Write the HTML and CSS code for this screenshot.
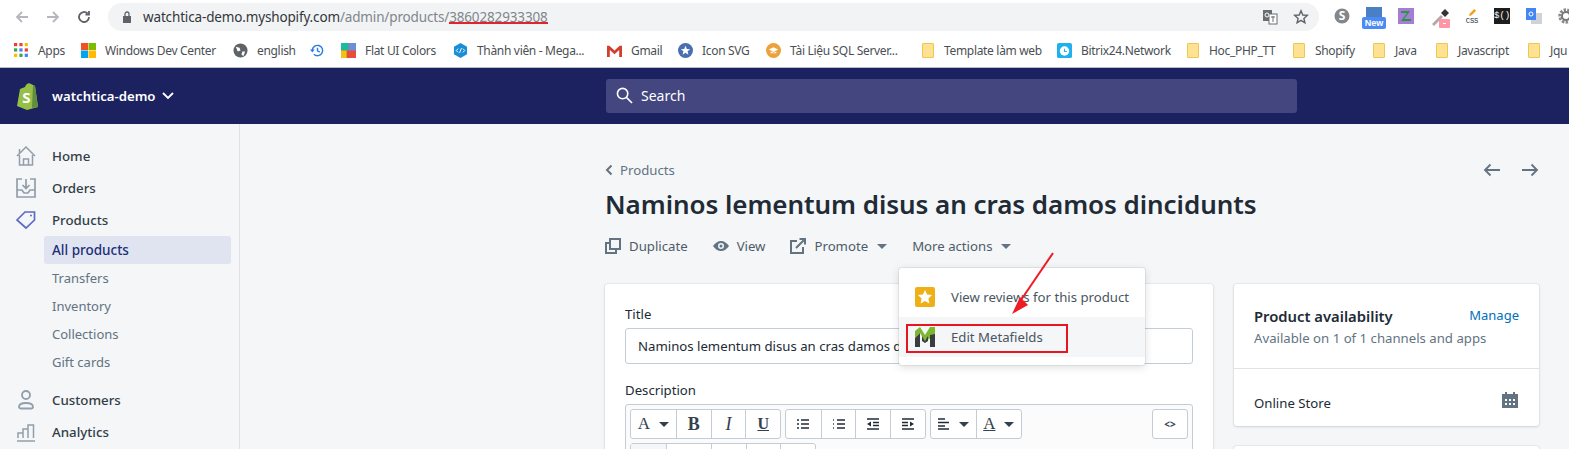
FILE: index.html
```html
<!DOCTYPE html>
<html lang="en">
  <head>
    <title>Products - watchtica-demo</title>
    <meta charset="UTF-8" />
    <link rel="stylesheet" href="styles.css">
  </head>
  <body>
    <!-- browser bars -->
    <div class="toolbar-top">
      <svg class="nav-btn" viewBox="0 0 16 16"><path d="M14 8H3M8 3L3 8l5 5" stroke="#b4b7bb"/></svg>
      <svg class="nav-btn" viewBox="0 0 16 16"><path d="M2 8h11M8 3l5 5-5 5" stroke="#b4b7bb"/></svg>
      <svg class="nav-btn" viewBox="0 0 16 16"><path d="M13 8a5 5 0 1 1-1.500-3.600M13 2v3.500H9.500" stroke="#5f6368"/></svg>
      <div class="omnibox">
        <svg class="lock" viewBox="0 0 10 12"><path d="M1 5h8v7H1z" fill="#5f6368"/><path d="M3 5V3a2 2 0 0 1 4 0v2" fill="none" stroke="#5f6368" stroke-width="1.300"/></svg>
        <span class="url">watchtica-demo.myshopify.com<span class="url-dim">/admin/products/<span class="url-id">3860282933308</span></span></span>
        <svg class="omni-icon" viewBox="0 0 16 16"><rect x="1" y="1" width="9" height="11" fill="#6a6e73"/><rect x="7" y="5" width="8" height="10" fill="#fff" stroke="#6a6e73"/><circle cx="5" cy="6" r="2" fill="none" stroke="#fff"/><path d="M9 8h4M11 7v6" stroke="#6a6e73"/></svg>
        <svg class="omni-icon" viewBox="0 0 16 16"><path d="M8 1.800l1.800 4.200 4.500.4-3.400 3 1 4.400L8 11.400l-3.900 2.400 1-4.400-3.400-3 4.500-.4z" fill="none" stroke="#5f6368" stroke-width="1.400"/></svg>
      </div>
      <div class="ext-icons">
        <svg class="ext" viewBox="0 0 16 16"><circle cx="8" cy="8" r="7.500" fill="#85868a"/><text x="8" y="12" class="ext-s">S</text></svg>
        <div class="ext-new"><span class="ext-new-top"></span><span class="ext-new-label">New</span></div>
        <svg class="ext ext-z" viewBox="0 0 16 16"><rect width="16" height="16" fill="#a77bd6"/><path d="M3 3h9L6 11h7v2H3l6-8H3z" fill="#1f9c3c"/></svg>
        <svg class="ext ext-drop" viewBox="0 0 20 20"><path d="M2 16l9-9 2 2-9 9z" fill="#b8a6a6"/><path d="M11 5l4-4 4 4-4 4z" fill="#333"/><rect x="9" y="11" width="11" height="9" rx="1" fill="#ff96a6"/><rect x="13" y="15" width="3" height="1" fill="#fff"/></svg>
        <div class="ext-css"><svg class="ext-pen" viewBox="0 0 10 10"><path d="M1 9l1-3 5-5 2 2-5 5z" fill="#f0a020"/></svg><span>CSS</span></div>
        <div class="ext-jq">$()</div>
        <svg class="ext" viewBox="0 0 16 16"><rect x="5" y="5" width="11" height="11" fill="#cfd2d6"/><rect width="10" height="12" fill="#4285f4"/><circle cx="5" cy="6" r="2" fill="none" stroke="#fff"/></svg>
        <svg class="ext" viewBox="0 0 16 16"><circle cx="8" cy="8" r="6" fill="none" stroke="#8a8a8a" stroke-width="3.400" stroke-dasharray="2.400 1.200"/><circle cx="8" cy="8" r="4" fill="none" stroke="#777" stroke-width="2"/></svg>
      </div>
    </div>
    <div class="bookmarks">
      <div class="bm"><svg class="bm-icon" viewBox="0 0 14 14"><g><rect x="0" width="3" height="3" fill="#ea4335"/><rect x="5" width="3" height="3" fill="#ea4335"/><rect x="10" width="3" height="3" fill="#fbbc05"/><rect x="0" y="5" width="3" height="3" fill="#34a853"/><rect x="5" y="5" width="3" height="3" fill="#4285f4"/><rect x="10" y="5" width="3" height="3" fill="#ea4335"/><rect x="0" y="10" width="3" height="3" fill="#fbbc05"/><rect x="5" y="10" width="3" height="3" fill="#34a853"/><rect x="10" y="10" width="3" height="3" fill="#4285f4"/></g></svg>Apps</div>
      <div class="bm"><svg class="bm-icon" viewBox="0 0 16 16"><rect width="7.500" height="7.500" fill="#f25022"/><rect x="8" width="8" height="7.500" fill="#7fba00"/><rect y="8" width="7.500" height="8" fill="#00a4ef"/><rect x="8" y="8" width="8" height="8" fill="#ffb900"/></svg>Windows Dev Center</div>
      <div class="bm"><svg class="bm-icon" viewBox="0 0 16 16"><circle cx="8" cy="8" r="7.500" fill="#5f6368"/><path d="M3 4l4 1 1 3-3 1zM10 9l3 0-2 5-2-2z" fill="#fff"/></svg>english</div>
      <div class="bm"><svg class="bm-icon" viewBox="0 0 16 16"><path d="M2.500 8a5.500 5.500 0 1 1 1.600 3.900M8 5v3.400l2.400 1.400" fill="none" stroke="#2a7de1" stroke-width="1.500"/><path d="M0 7h5L2.500 10z" fill="#2a7de1"/></svg></div>
      <div class="bm"><svg class="bm-icon" viewBox="0 0 16 16"><rect width="16" height="16" fill="#e74c3c"/><rect width="8" height="8" fill="#1abc9c"/><rect x="8" width="8" height="8" fill="#6c8fd6"/><rect y="8" width="6" height="8" fill="#f1c40f"/></svg>Flat UI Colors</div>
      <div class="bm"><svg class="bm-icon" viewBox="0 0 16 16"><path d="M8 0l7 4v8l-7 4-7-4V4z" fill="#1a8fd8"/><path d="M5.500 6L3.500 8l2 2M10.500 6l2 2-2 2M9 5.500L7 10.500" fill="none" stroke="#fff"/></svg>Thành viên - Mega...</div>
      <div class="bm"><svg class="bm-icon" viewBox="0 0 16 16"><path d="M0 3h2.500L8 8l5.500-5H16v12h-3V7.500L8 12 3 7.500V15H0z" fill="#d0402f"/></svg>Gmail</div>
      <div class="bm"><svg class="bm-icon" viewBox="0 0 16 16"><circle cx="8" cy="8" r="8" fill="#4a6fb0"/><path d="M8 3l1.400 3.400 3.600.2-2.800 2.300.9 3.500L8 10.500l-3.100 1.900.9-3.500L3 6.600l3.600-.2z" fill="#fff"/></svg>Icon SVG</div>
      <div class="bm"><svg class="bm-icon" viewBox="0 0 16 16"><circle cx="8" cy="8" r="8" fill="#eda13a"/><path d="M3 7l5-2.500L13 7l-5 2.500z" fill="#fff"/><path d="M5 9v2h6V9l-3 1.500z" fill="#fff"/></svg>Tài Liệu SQL Server...</div>
      <div class="bm"><span class="folder"></span>Template làm web</div>
      <div class="bm"><svg class="bm-icon" viewBox="0 0 16 16"><rect width="16" height="16" rx="2" fill="#1fb1ec"/><circle cx="8" cy="8.500" r="5" fill="#fff"/><path d="M8 6v3h2.500" fill="none" stroke="#1fb1ec" stroke-width="1.200"/></svg>Bitrix24.Network</div>
      <div class="bm"><span class="folder"></span>Hoc_PHP_TT</div>
      <div class="bm"><span class="folder"></span>Shopify</div>
      <div class="bm"><span class="folder"></span>Java</div>
      <div class="bm"><span class="folder"></span>Javascript</div>
      <div class="bm"><span class="folder"></span>Jqu</div>
    </div>

    <!-- shopify top bar -->
    <header class="topbar">
      <div class="store">
        <svg class="shop-logo" viewBox="2 0 22 28"><path d="M2 24L5 7l5-2c1-3 4-5 6-3l2 1 2 1 3 21-11 3z" fill="#95bf47"/><path d="M18 3l2 1 3 21-6 1z" fill="#5e8e3e"/><text x="11.500" y="21" class="shop-s">S</text></svg>
        <span class="store-name">watchtica-demo</span>
        <svg class="store-caret" viewBox="0 0 12 8"><path d="M1 1l5 5 5-5" fill="none" stroke="#fff" stroke-width="1.800"/></svg>
      </div>
      <div class="search">
        <svg class="search-icon" viewBox="0 0 18 18"><circle cx="7" cy="7" r="5.500" fill="none" stroke="#fff" stroke-width="1.700"/><path d="M11 11l6 6" stroke="#fff" stroke-width="1.700"/></svg>
        Search
      </div>
    </header>

    <div class="layout">
      <nav class="sidebar">
        <a class="nav-item"><svg class="nav-icon" viewBox="0 0 20 20"><path d="M1 10L10 1l9 9M3.500 3v5M3.500 9v10h13V9M7.500 19v-6h5v6" fill="none" stroke="#919eab" stroke-width="1.500"/></svg>Home</a>
        <a class="nav-item"><svg class="nav-icon" viewBox="0 0 20 20"><path d="M6 1H1v18h18V1h-5M1 12h5l2 3h4l2-3h5M10 1v9M6.500 7L10 10.500 13.500 7" fill="none" stroke="#919eab" stroke-width="1.700"/></svg>Orders</a>
        <a class="nav-item"><svg class="nav-icon" viewBox="0 0 20 20"><path d="M1 10l8-8h9.500v8l-8.500 8z" fill="none" stroke="#5c6ac4" stroke-width="1.700"/><circle cx="15" cy="5.500" r="1" fill="#5c6ac4"/></svg>Products</a>
        <a class="sub-item sub-active">All products</a>
        <a class="sub-item">Transfers</a>
        <a class="sub-item">Inventory</a>
        <a class="sub-item">Collections</a>
        <a class="sub-item">Gift cards</a>
        <a class="nav-item nav-gap"><svg class="nav-icon" viewBox="0 0 20 20"><circle cx="10" cy="5" r="4" fill="none" stroke="#919eab" stroke-width="1.800"/><path d="M3 17c0-3 3-4 7-4s7 1 7 4c0 1-1 1.500-2 1.500H5c-1 0-2-.5-2-1.500z" fill="none" stroke="#919eab" stroke-width="1.800"/></svg>Customers</a>
        <a class="nav-item"><svg class="nav-icon" viewBox="0 0 20 20"><path d="M1 19h18M2 16v-5h5v5M7 16V7h5v9M12 16V3h5.500v13" fill="none" stroke="#919eab" stroke-width="1.500"/></svg>Analytics</a>
      </nav>

      <main class="main">
        <div class="crumb-row">
          <div class="crumb"><svg class="crumb-icon" viewBox="0 0 8 12"><path d="M6.500 1.500L2 6l4.500 4.500" fill="none" stroke="#637381" stroke-width="2"/></svg>Products</div>
          <div class="pager">
            <svg class="pager-icon" viewBox="0 0 18 14"><path d="M17 7H2M7.500 1.500L2 7l5.500 5.500" fill="none" stroke="#637381" stroke-width="1.800"/></svg>
            <svg class="pager-icon" viewBox="0 0 18 14"><path d="M1 7h15M10.500 1.500L16 7l-5.500 5.500" fill="none" stroke="#637381" stroke-width="1.800"/></svg>
          </div>
        </div>
        <h1 class="title">Naminos lementum disus an cras damos dincidunts</h1>
        <div class="actions">
          <span class="action"><svg class="action-icon" viewBox="0 0 16 16"><path d="M5 1h10v10H5z" fill="none" stroke="#637381" stroke-width="2"/><path d="M4 5H1v10h10v-3" fill="none" stroke="#637381" stroke-width="2"/></svg>Duplicate</span>
          <span class="action"><svg class="action-icon" viewBox="0 0 16 16"><path d="M0 8c2-3 5-5 8-5s6 2 8 5c-2 3-5 5-8 5s-6-2-8-5z" fill="#637381"/><circle cx="8" cy="8" r="3" fill="#f4f6f8"/><circle cx="8" cy="8" r="1.500" fill="#637381"/></svg>View</span>
          <span class="action"><svg class="action-icon" viewBox="0 0 16 16"><path d="M7 3H1v12h12V9M6 10L15 1M9.500 1H15v5.500" fill="none" stroke="#637381" stroke-width="2"/></svg>Promote<i class="caret"></i></span>
          <span class="action">More actions<i class="caret"></i></span>
        </div>

        <div class="columns">
          <section class="card card-main">
            <label class="field-label">Title</label>
            <div class="field-input">Naminos lementum disus an cras damos dincidunts</div>
            <label class="field-label field-label-desc">Description</label>
            <div class="editor">
              <div class="editor-row">
                <div class="btn-group">
                  <span class="ed-btn ed-wide ed-serif">A<i class="caret caret-dark"></i></span>
                  <span class="ed-btn ed-serif ed-b">B</span>
                  <span class="ed-btn ed-serif ed-i">I</span>
                  <span class="ed-btn ed-serif ed-u">U</span>
                </div>
                <div class="btn-group">
                  <span class="ed-btn"><svg class="ed-icon" viewBox="0 0 12 12"><path d="M0 2h2M4 2h8M0 6h2M4 6h8M0 10h2M4 10h8" stroke="#212b36" stroke-width="1.500"/></svg></span>
                  <span class="ed-btn"><svg class="ed-icon" viewBox="0 0 12 12"><path d="M4 2h8M4 6h8M4 10h8" stroke="#212b36" stroke-width="1.500"/><path d="M0 2h2M0 6h2M0 10h2" stroke="#637381" stroke-width="2" stroke-dasharray="1 1"/></svg></span>
                  <span class="ed-btn"><svg class="ed-icon" viewBox="0 0 12 12"><path d="M0 1h12M6 4.500h6M6 7.500h6M0 11h12" stroke="#212b36" stroke-width="1.500"/><path d="M4 3.500v5L0 6z" fill="#212b36"/></svg></span>
                  <span class="ed-btn"><svg class="ed-icon" viewBox="0 0 12 12"><path d="M0 1h12M0 4.500h6M0 7.500h6M0 11h12" stroke="#212b36" stroke-width="1.500"/><path d="M8 3.500v5L12 6z" fill="#212b36"/></svg></span>
                </div>
                <div class="btn-group">
                  <span class="ed-btn ed-wide"><svg class="ed-icon" viewBox="0 0 12 12"><path d="M0 1h7M0 4.500h11M0 8h7M0 11h11" stroke="#212b36" stroke-width="1.500"/></svg><i class="caret caret-dark"></i></span>
                  <span class="ed-btn ed-wide ed-serif ed-color">A<i class="caret caret-dark"></i></span>
                </div>
                <div class="btn-group btn-group-end">
                  <span class="ed-btn ed-code">&lt;&gt;</span>
                </div>
              </div>
              <div class="editor-row">
                <div class="btn-group">
                  <span class="ed-btn ed-first"></span>
                  <span class="ed-btn ed-wide"></span>
                  <span class="ed-btn"></span>
                  <span class="ed-btn"></span>
                  <span class="ed-btn"></span>
                </div>
              </div>
            </div>
          </section>

          <aside class="side">
            <section class="card card-avail">
              <div class="avail-head">
                <div class="avail-top"><h2 class="avail-title">Product availability</h2><a class="manage">Manage</a></div>
                <p class="avail-sub">Available on 1 of 1 channels and apps</p>
              </div>
              <div class="avail-row">
                <span>Online Store</span>
                <svg class="cal-icon" viewBox="0 0 16 16"><path d="M0 2h3V0h2v2h6V0h2v2h3v14H0z" fill="#637381"/><path d="M3 7h2v2H3zM7 7h2v2H7zM11 7h2v2h-2zM3 11h2v2H3zM7 11h2v2H7zM11 11h2v2h-2z" fill="#fff"/></svg>
              </div>
            </section>
            <section class="card card-next"></section>
          </aside>
        </div>
      </main>
    </div>

    <!-- open menu and the annotations drawn over the screenshot -->
    <div class="menu">
      <div class="menu-item"><svg class="menu-icon" viewBox="0 0 20 20"><rect width="20" height="20" rx="2" fill="#eeb016"/><path d="M10 3l2.100 4.600 5 .5-3.700 3.400 1 4.900L10 13.900l-4.400 2.500 1-4.900L2.900 8.100l5-.5z" fill="#fff"/></svg>View reviews for this product</div>
      <div class="menu-item menu-item-on"><svg class="menu-icon" viewBox="0 0 20 20"><path d="M0 4L5 0l5 8 5-8h5v9L10 14 5 6l-5 5z" fill="#7cb82f"/><path d="M0 11l5-5v14H0zM15 8l5-1v13h-5zM7 9l3 5 3-5v5l-3 2-3-2z" fill="#3a3d40"/></svg>Edit Metafields</div>
    </div>
    <div class="red-box"></div>
    <svg class="red-arrow" viewBox="0 0 60 70"><path d="M48 2L16 49" stroke="#ee1c25" stroke-width="2"/><path d="M7 63l8-17 8 8z" fill="#ee1c25"/></svg>
  </body>
</html>
```

FILE: styles.css
```css
* {
  box-sizing: border-box;
}
html, body {
  margin: 0;
  height: 449px;
  overflow: hidden;
}
body {
  position: relative;
  background: #f4f6f8;
  font-family: "Noto Sans", "Open Sans", sans-serif;
  font-size: 14px;
  color: #212b36;
}

/* browser chrome */
.toolbar-top {
  height: 34px;
  padding: 3px 0 0 14px;
  display: flex;
  background: #fff;
}
.nav-btn {
  width: 16px;
  height: 16px;
  margin: 6px 15px 0 0;
  flex: none;
  fill: none;
  stroke-width: 1.800;
}
.omnibox {
  width: 1211px;
  height: 28px;
  margin-left: 1px;
  padding: 0 10px 0 14px;
  display: flex;
  flex: none;
  align-items: center;
  background: #f1f3f4;
  border-radius: 14px;
}
.lock {
  width: 10px;
  height: 12px;
  margin-right: 11px;
}
.url {
  flex: 1;
  font-size: 13.500px;
  letter-spacing: -0.150px;
  color: #33373b;
}
.url-dim {
  color: #80868b;
}
.url-id {
  position: relative;
}
.url-id::after {
  content: "";
  position: absolute;
  left: 0;
  right: 0;
  bottom: 2px;
  height: 2px;
  background: #e0232e;
}
.omni-icon {
  width: 16px;
  height: 16px;
  margin-left: 15px;
}
.ext-icons {
  display: flex;
  align-items: flex-start;
  gap: 16px;
  padding: 5px 0 0 15px;
}
.ext {
  width: 16px;
  height: 16px;
  flex: none;
}
.ext-s {
  font: bold 12px "Noto Sans", sans-serif;
  fill: #fff;
  text-anchor: middle;
}
.ext-new {
  width: 24px;
  height: 22px;
  margin: -1px -4px 0 -4px;
  display: flex;
  flex-direction: column;
  align-items: center;
  flex: none;
}
.ext-new-top {
  width: 16px;
  height: 10px;
  background: #4a7fc4;
}
.ext-new-label {
  width: 24px;
  height: 12px;
  border-radius: 2px;
  background: #4c8bf5;
  color: #fff;
  font: bold 9px/12px "Liberation Sans", sans-serif;
  text-align: center;
}
.ext-drop {
  width: 20px;
  height: 20px;
  margin-right: -3px;
}
.ext-css {
  width: 18px;
  margin-right: -3px;
  display: flex;
  flex-direction: column;
  align-items: center;
  font: 7px/8px "Liberation Mono", monospace;
  flex: none;
}
.ext-pen {
  width: 9px;
  height: 9px;
}
.ext-jq {
  width: 16px;
  height: 16px;
  background: #1d1d1d;
  color: #fff;
  font: 9px/16px "Liberation Mono", monospace;
  text-align: center;
  flex: none;
}
.bookmarks {
  height: 34px;
  padding-left: 14px;
  display: grid;
  grid-template-columns: 67px 152px 77px 31px 112px 154px 71px 88px 156px 135px 130px 106px 80px 63px 92px 40px;
  align-items: center;
  background: #fff;
  border-bottom: 1px solid #b9bcc2;
  font-size: 12px;
  letter-spacing: -0.320px;
  color: #4b4f54;
  white-space: nowrap;
  overflow: hidden;
}
.bm {
  display: flex;
  align-items: center;
}
.bm-icon {
  width: 15px;
  height: 15px;
  margin-right: 9px;
  flex: none;
}
.folder {
  width: 12px;
  height: 15px;
  margin-right: 10px;
  background: #fde293;
  border: 1px solid #f0c64e;
  border-radius: 1px;
  flex: none;
}

/* shopify top bar */
.topbar {
  height: 56px;
  display: flex;
  align-items: center;
  background: #1c2260;
}
.store {
  width: 606px;
  padding-left: 16px;
  display: flex;
  align-items: center;
}
.shop-logo {
  width: 24px;
  height: 28px;
  margin-right: 12px;
}
.shop-s {
  font: bold 15px "Noto Sans", sans-serif;
  fill: #fff;
  text-anchor: middle;
}
.store-name {
  font-size: 13.200px;
  font-weight: 600;
  color: #fff;
}
.store-caret {
  width: 12px;
  height: 8px;
  margin-left: 7px;
}
.search {
  width: 691px;
  height: 34px;
  padding: 0 0 2px 10px;
  display: flex;
  align-items: center;
  gap: 8px;
  background: #43467f;
  border-radius: 3px;
  color: #fff;
  font-size: 14px;
}
.search-icon {
  width: 17px;
  height: 17px;
}

/* body */
.layout {
  display: flex;
}
.sidebar {
  width: 240px;
  height: 325px;
  flex: none;
  padding: 16px 8px 0 0;
  border-right: 1px solid #dfe3e8;
  display: flex;
  flex-direction: column;
}
.nav-item {
  height: 32px;
  padding-left: 16px;
  display: flex;
  align-items: center;
  font-weight: 500;
  font-size: 13.300px;
  color: #333d47;
}
.nav-gap {
  margin-top: 8px;
}
.nav-icon {
  width: 20px;
  height: 20px;
  margin-right: 16px;
  flex: none;
}
.sub-item {
  height: 28px;
  margin-left: 44px;
  padding-left: 8px;
  display: flex;
  align-items: center;
  font-size: 13px;
  color: #637381;
}
.sub-active {
  background: #e0e4f1;
  border-radius: 3px;
  font-weight: 500;
  font-size: 13.500px;
  color: #202e78;
}
.main {
  flex: 1;
  padding: 36px 30px 0 365px;
}
.crumb-row {
  height: 20px;
  display: flex;
  justify-content: space-between;
  align-items: center;
}
.crumb {
  display: flex;
  align-items: center;
  gap: 7px;
  font-size: 13.200px;
  color: #637381;
}
.crumb-icon {
  width: 8px;
  height: 12px;
}
.pager {
  display: flex;
  gap: 20px;
}
.pager-icon {
  width: 18px;
  height: 14px;
}
.title {
  margin: 5px 0 0;
  height: 38px;
  font-size: 26px;
  line-height: 38px;
  font-weight: 600;
  letter-spacing: -0.050px;
  color: #212b36;
  white-space: nowrap;
}
.actions {
  height: 20px;
  margin-top: 13px;
  display: flex;
  align-items: center;
  gap: 25px;
  font-size: 13.200px;
  color: #4f5b68;
}
.action {
  display: flex;
  align-items: center;
}
.action-icon {
  width: 16px;
  height: 16px;
  margin-right: 8px;
}
.caret {
  width: 0;
  height: 0;
  margin-left: 9px;
  border: 5px solid transparent;
  border-top: 5px solid #637381;
  border-bottom: 0;
}
.caret-dark {
  border-top-color: #33404d;
}
.columns {
  display: flex;
  gap: 21px;
  margin-top: 28px;
}
.card {
  background: #fff;
  border-radius: 3px;
  box-shadow: 0 0 0 1px rgba(63, 63, 68, 0.05), 0 1px 3px 0 rgba(63, 63, 68, 0.15);
}
.card-main {
  width: 608px;
  height: 240px;
  padding: 20px;
}
.field-label {
  display: block;
  height: 20px;
  line-height: 20px;
  font-size: 13.200px;
}
.field-input {
  height: 36px;
  margin-top: 4px;
  padding-left: 12px;
  border: 1px solid #c4cdd5;
  border-radius: 3px;
  line-height: 34px;
  font-size: 13.200px;
  white-space: nowrap;
  overflow: hidden;
}
.field-label-desc {
  margin-top: 16px;
}
.editor {
  height: 60px;
  margin-top: 4px;
  padding: 4px;
  border: 1px solid #c4cdd5;
  border-radius: 3px 3px 0 0;
  background: #fbfbfc;
}
.editor-row {
  display: flex;
  gap: 4px;
  margin-bottom: 4px;
}
.btn-group {
  height: 30px;
  display: flex;
  border: 1px solid #c4cdd5;
  border-radius: 3px;
  background: #fff;
}
.btn-group-end {
  margin-left: auto;
}
.ed-btn {
  width: 34.700px;
  display: flex;
  align-items: center;
  justify-content: center;
  border-left: 1px solid #c4cdd5;
  color: #33404d;
}
.ed-btn:first-child {
  border-left: 0;
}
.ed-wide {
  width: 45px;
}
.ed-first {
  width: 35px;
  background: #f4f6f8;
}
.ed-serif {
  font-family: "Liberation Serif", serif;
  font-size: 17px;
}
.ed-b {
  font-weight: 700;
  font-size: 18px;
}
.ed-i {
  font-style: italic;
  font-size: 18px;
}
.ed-u {
  font-weight: 700;
  text-decoration: underline;
  font-size: 16px;
}
.ed-color {
  text-decoration: underline;
}
.ed-icon {
  width: 12px;
  height: 12px;
}
.ed-code {
  width: 34px;
  font-size: 10px;
  font-weight: 700;
}
.side {
  width: 305px;
  display: flex;
  flex-direction: column;
  gap: 20px;
}
.card-avail {
  height: 142px;
}
.avail-head {
  height: 85px;
  padding: 22px 20px 0;
  border-bottom: 1px solid #dfe3e8;
}
.avail-top {
  display: flex;
  justify-content: space-between;
  align-items: flex-start;
}
.avail-title {
  margin: 0;
  font-size: 14.800px;
  line-height: 20px;
  font-weight: 600;
}
.manage {
  line-height: 18px;
  font-size: 13px;
  color: #006fbb;
}
.avail-sub {
  margin: 2px 0 0;
  font-size: 13.200px;
  line-height: 20px;
  color: #637381;
}
.avail-row {
  height: 57px;
  padding: 10px 21px 0 20px;
  display: flex;
  justify-content: space-between;
  align-items: center;
  font-size: 13.200px;
}
.cal-icon {
  width: 16px;
  height: 16px;
  margin-top: -6px;
}
.card-next {
  height: 60px;
}

/* dropdown over the page */
.menu {
  position: absolute;
  left: 899px;
  top: 268px;
  width: 246px;
  height: 97px;
  padding: 9px 0;
  background: #fff;
  border-radius: 3px;
  box-shadow: 0 0 0 1px rgba(63, 63, 68, 0.08), 0 2px 8px rgba(63, 63, 68, 0.18);
}
.menu-item {
  height: 40px;
  padding-left: 16px;
  display: flex;
  align-items: center;
  gap: 16px;
  font-size: 13.200px;
  color: #4a5560;
}
.menu-item-on {
  background: #f4f6f8;
}
.menu-icon {
  width: 20px;
  height: 20px;
}
.red-box {
  position: absolute;
  left: 906px;
  top: 324px;
  width: 162px;
  height: 29px;
  border: 2px solid #e8141f;
}
.red-arrow {
  position: absolute;
  left: 1005px;
  top: 251px;
  width: 60px;
  height: 70px;
}
```
